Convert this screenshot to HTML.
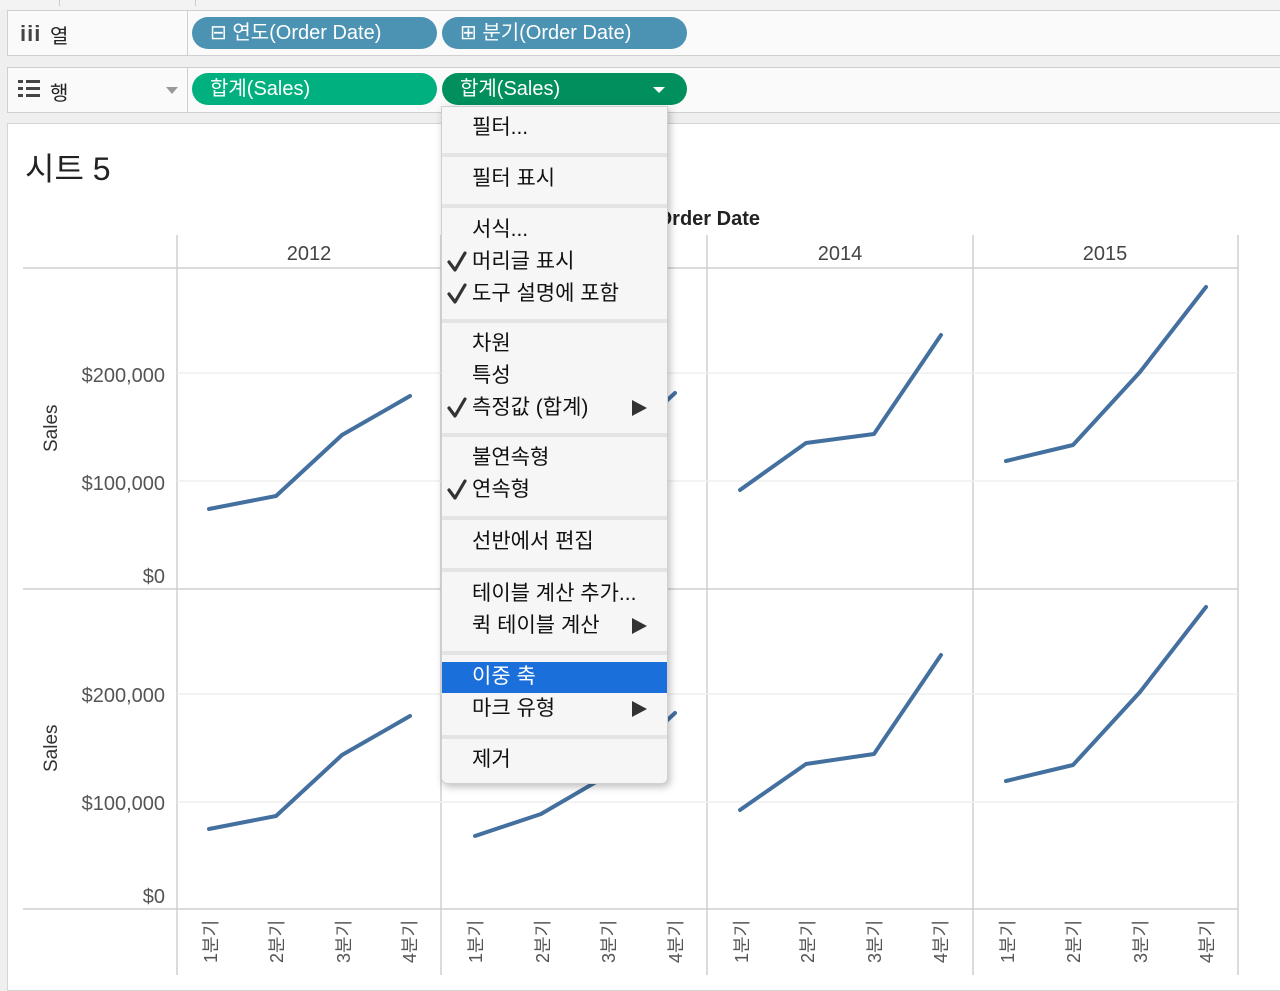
<!DOCTYPE html>
<html><head><meta charset="utf-8"><style>
*{margin:0;padding:0;box-sizing:border-box}
body{width:1280px;height:991px;background:#efefef;position:relative;overflow:hidden;font-family:"Liberation Sans","Noto Sans CJK KR",sans-serif;}
.a{position:absolute}
.shelf{position:absolute;left:7px;width:1280px;height:46px;background:#fafafa;border:1px solid #cfcfcf}
.lab{position:absolute;left:0;top:0;width:180px;height:44px;border-right:1px solid #cfcfcf}
.pill{position:absolute;height:32px;border-radius:16px;color:#fff;font-size:20px;line-height:32px;padding-left:18px}
.m{position:absolute;left:472px;font-size:21px;color:#111;line-height:24px}
.ck{position:absolute;left:446px;width:20px;height:20px}
.tri{position:absolute;left:632px;width:0;height:0;border-left:15px solid #333;border-top:8px solid transparent;border-bottom:8px solid transparent}
.sep{position:absolute;left:442px;width:225px;height:4px;background:#e4e4e4}
</style></head><body>
<div class="a" style="left:0;top:0;width:1280px;height:10px;background:#f3f3f3"></div>
<div class="a" style="left:59px;top:0;width:1px;height:6px;background:#ccc"></div>
<div class="a" style="left:195px;top:0;width:1px;height:6px;background:#ccc"></div>
<div class="shelf" style="top:10px"><div class="lab">
<div class="a" style="left:12px;top:10px;font-size:22px;font-weight:bold;color:#444;letter-spacing:1px">iii</div>
<div class="a" style="left:42px;top:9px;font-size:20px;color:#222">열</div></div></div>
<div class="shelf" style="top:67px"><div class="lab">
<div class="a" style="left:10px;top:12px;width:22px;height:18px;background:repeating-linear-gradient(#444 0 3px,transparent 3px 7px)"></div>
<div class="a" style="left:15px;top:12px;width:3px;height:18px;background:#fafafa"></div>
<div class="a" style="left:42px;top:9px;font-size:20px;color:#222">행</div>
<div class="a" style="left:158px;top:19px;border-top:7px solid #999;border-left:6px solid transparent;border-right:6px solid transparent"></div></div></div>
<div class="pill" style="left:192px;top:17px;width:245px;background:#4b92b3">⊟ 연도(Order Date)</div>
<div class="pill" style="left:442px;top:17px;width:245px;background:#4b92b3">⊞ 분기(Order Date)</div>
<div class="pill" style="left:192px;top:73px;width:245px;background:#00b07f">합계(Sales)</div>
<div class="pill" style="left:442px;top:73px;width:245px;background:#008f5d">합계(Sales)</div>
<div class="a" style="left:653px;top:87px;border-top:6px solid #fff;border-left:6px solid transparent;border-right:6px solid transparent"></div>
<div class="a" style="left:7px;top:123px;width:1280px;height:868px;background:#fff;border:1px solid #d5d5d5"></div>
<div class="a" style="left:25px;top:144px;font-size:32px;color:#222">시트 5</div>
<div class="a" style="right:520px;top:208px;font-size:20px;color:#222;font-weight:bold">Order Date</div>
<svg class="a" style="left:0;top:0" width="1280" height="991">
<g stroke="#cfcfcf" stroke-width="1.5" fill="none">
<line x1="23" y1="268" x2="1238" y2="268"/><line x1="23" y1="589" x2="1238" y2="589"/><line x1="23" y1="909" x2="1238" y2="909"/>
<line x1="177" y1="235" x2="177" y2="975"/><line x1="441" y1="235" x2="441" y2="975"/><line x1="707" y1="235" x2="707" y2="975"/><line x1="973" y1="235" x2="973" y2="975"/><line x1="1238" y1="235" x2="1238" y2="975"/>
</g>
<g stroke="#efefef" stroke-width="1.5"><line x1="177" y1="373" x2="1238" y2="373"/><line x1="177" y1="481" x2="1238" y2="481"/><line x1="177" y1="694" x2="1238" y2="694"/><line x1="177" y1="802" x2="1238" y2="802"/></g>
<g font-size="20" fill="#444" text-anchor="middle" font-family="Liberation Sans,sans-serif">
<text x="309" y="260">2012</text><text x="840" y="260">2014</text><text x="1105" y="260">2015</text></g>
<g font-size="20" fill="#555" text-anchor="end" font-family="Liberation Sans,sans-serif">
<text x="165" y="382">$200,000</text><text x="165" y="490">$100,000</text><text x="165" y="583">$0</text>
<text x="165" y="702">$200,000</text><text x="165" y="810">$100,000</text><text x="165" y="903">$0</text></g>
<g font-size="19" fill="#333" font-family="Liberation Sans,sans-serif">
<text transform="translate(57,452) rotate(-90)">Sales</text><text transform="translate(57,772) rotate(-90)">Sales</text></g>
<g font-size="18" fill="#555" font-family="Liberation Sans,Noto Sans CJK KR,sans-serif">
<text transform="translate(217,963) rotate(-90)">1분기</text><text transform="translate(283,963) rotate(-90)">2분기</text><text transform="translate(350,963) rotate(-90)">3분기</text><text transform="translate(416,963) rotate(-90)">4분기</text>
<text transform="translate(482,963) rotate(-90)">1분기</text><text transform="translate(549,963) rotate(-90)">2분기</text><text transform="translate(615,963) rotate(-90)">3분기</text><text transform="translate(682,963) rotate(-90)">4분기</text>
<text transform="translate(748,963) rotate(-90)">1분기</text><text transform="translate(814,963) rotate(-90)">2분기</text><text transform="translate(881,963) rotate(-90)">3분기</text><text transform="translate(947,963) rotate(-90)">4분기</text>
<text transform="translate(1014,963) rotate(-90)">1분기</text><text transform="translate(1080,963) rotate(-90)">2분기</text><text transform="translate(1147,963) rotate(-90)">3분기</text><text transform="translate(1213,963) rotate(-90)">4분기</text></g>
<g stroke="#44709f" stroke-width="4" fill="none" stroke-linecap="round" stroke-linejoin="round">
<polyline points="209,509 276,496 342,435 410,396"/><polyline points="209,829 276,816 342,755 410,716"/>
<polyline points="475,516 541,494 608,455 675,393"/><polyline points="475,836 541,814 608,775 675,713"/>
<polyline points="740,490 806,443 874,434 941,335"/><polyline points="740,810 806,764 874,754 941,655"/>
<polyline points="1006,461 1073,445 1140,372 1206,287"/><polyline points="1006,781 1073,765 1140,692 1206,607"/></g>
</svg>
<div class="a" style="left:441px;top:106px;width:227px;height:678px;background:#f6f6f6;border:1px solid #d0d0d0;border-radius:0 0 6px 6px;box-shadow:2px 3px 8px rgba(0,0,0,.25)"></div>
<div class="sep" style="top:153px"></div><div class="sep" style="top:204px"></div><div class="sep" style="top:319px"></div><div class="sep" style="top:433px"></div><div class="sep" style="top:516px"></div><div class="sep" style="top:568px"></div><div class="sep" style="top:651px"></div><div class="sep" style="top:735px"></div>
<div class="a" style="left:442px;top:662px;width:225px;height:31px;background:#1a6fdb"></div>
<div class="m" style="top:116px">필터...</div>
<div class="m" style="top:167px">필터 표시</div>
<div class="m" style="top:218px">서식...</div>
<div class="m" style="top:250px">머리글 표시</div>
<div class="m" style="top:282px">도구 설명에 포함</div>
<div class="m" style="top:332px">차원</div>
<div class="m" style="top:364px">특성</div>
<div class="m" style="top:396px">측정값 (합계)</div><div class="tri" style="top:400px"></div>
<div class="m" style="top:446px">불연속형</div>
<div class="m" style="top:478px">연속형</div>
<div class="m" style="top:530px">선반에서 편집</div>
<div class="m" style="top:582px">테이블 계산 추가...</div>
<div class="m" style="top:614px">퀵 테이블 계산</div><div class="tri" style="top:618px"></div>
<div class="m" style="top:665px;color:#fff">이중 축</div>
<div class="m" style="top:697px">마크 유형</div><div class="tri" style="top:701px"></div>
<div class="m" style="top:748px">제거</div>
<svg class="a" style="left:0;top:0" width="1280" height="991">
<g stroke="#333" stroke-width="3.2" fill="none" stroke-linecap="round" stroke-linejoin="round">
<polyline points="449,262 455,270 465,253"/><polyline points="449,294 455,302 465,285"/><polyline points="449,408 455,416 465,399"/><polyline points="449,490 455,498 465,481"/>
</g></svg>
</body></html>
